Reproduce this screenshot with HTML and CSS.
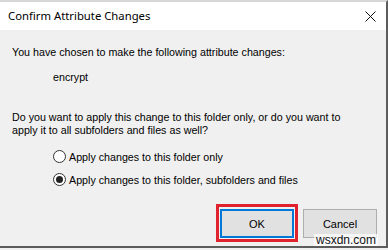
FILE: index.html
```html
<!DOCTYPE html>
<html lang="en">
<head>
    <meta charset="UTF-8">
    <title>Confirm Attribute Changes</title>
    <link rel="stylesheet" href="styles.css">
</head>
<body>
<div class="window">
    <div class="titlebar">
        <div class="title">Confirm Attribute Changes</div>
        <svg class="close" width="11" height="11" viewBox="0 0 11 11">
            <path d="M0.5 0.5 L10.5 10.5 M10.5 0.5 L0.5 10.5" stroke="#111" stroke-width="1" fill="none"/>
        </svg>
    </div>
    <div class="content">
        <p class="intro">You have chosen to make the following attribute changes:</p>
        <p class="attr">encrypt</p>
        <p class="question">Do you want to apply this change to this folder only, or do you want to<br>apply it to all subfolders and files as well?</p>
        <div class="options">
            <label class="option"><span class="radio"></span>Apply changes to this folder only</label>
            <label class="option"><span class="radio checked"></span>Apply changes to this folder, subfolders and files</label>
        </div>
        <div class="buttons">
            <div class="highlight">
                <button class="btn default">OK</button>
            </div>
            <button class="btn">Cancel</button>
        </div>
    </div>
    <span class="watermark">wsxdn.com</span>
</div>
</body>
</html>
```

FILE: styles.css
```css
* {
    box-sizing: border-box;
}

body {
    margin: 0;
    padding: 0;
    width: 388px;
    height: 250px;
    overflow: hidden;
    background-color: #f0f0f0;
    font-family: 'Liberation Sans', Arial, sans-serif;
    font-size: 10.7px;
    color: #000;
}

.window {
    position: relative;
    width: 388px;
    height: 248px;
    border-top: 2px solid #d6d6d6;
    border-right: 2px solid #5c5c5c;
    border-bottom: 2px solid #5c5c5c;
    background-color: #f0f0f0;
}

.titlebar {
    height: 28px;
    background: #fff;
    display: flex;
    justify-content: space-between;
    align-items: center;
    padding: 0 10px 0 8px;
}

.title {
    font-family: 'Noto Sans', sans-serif;
    font-size: 11.3px;
    color: #000;
    padding-bottom: 1px;
}

.close {
    display: block;
    margin-top: 1px;
}

.content {
    padding: 16px 0 0 12px;
}

p {
    margin: 0;
    line-height: 13px;
}

.attr {
    margin: 12px 0 0 41px;
}

.question {
    margin-top: 27px;
}

.options {
    margin: 13px 0 0 41px;
    display: flex;
    flex-direction: column;
    gap: 10px;
}

.option {
    display: flex;
    align-items: center;
    height: 13px;
    gap: 3px;
}

.radio {
    width: 13px;
    height: 13px;
    border: 1px solid #333;
    border-radius: 50%;
    background: #fff;
    display: flex;
    justify-content: center;
    align-items: center;
}

.radio.checked:after {
    content: "";
    width: 7px;
    height: 7px;
    border-radius: 50%;
    background: #222;
}

.buttons {
    display: flex;
    align-items: flex-start;
    margin: 23px 0 0 204px;
}

.highlight {
    border: 3px solid #e0222e;
    padding: 2px 1px 1px 1px;
    margin-top: -5px;
}

.btn {
    width: 74px;
    height: 29px;
    margin: 0;
    background: #e1e1e1;
    border: 1px solid #adadad;
    font-family: 'Liberation Sans', Arial, sans-serif;
    font-size: 11px;
    color: #000;
    display: block;
}

.btn.default {
    border: 2px solid #0078d7;
}

.highlight + .btn {
    margin-left: 5px;
}

.watermark {
    position: absolute;
    right: 8px;
    bottom: 0;
    padding: 0 2px;
    background: rgba(255, 255, 255, 0.7);
    font-family: 'Liberation Sans', Arial, sans-serif;
    font-size: 12px;
    line-height: 12px;
    color: #111;
}
```
